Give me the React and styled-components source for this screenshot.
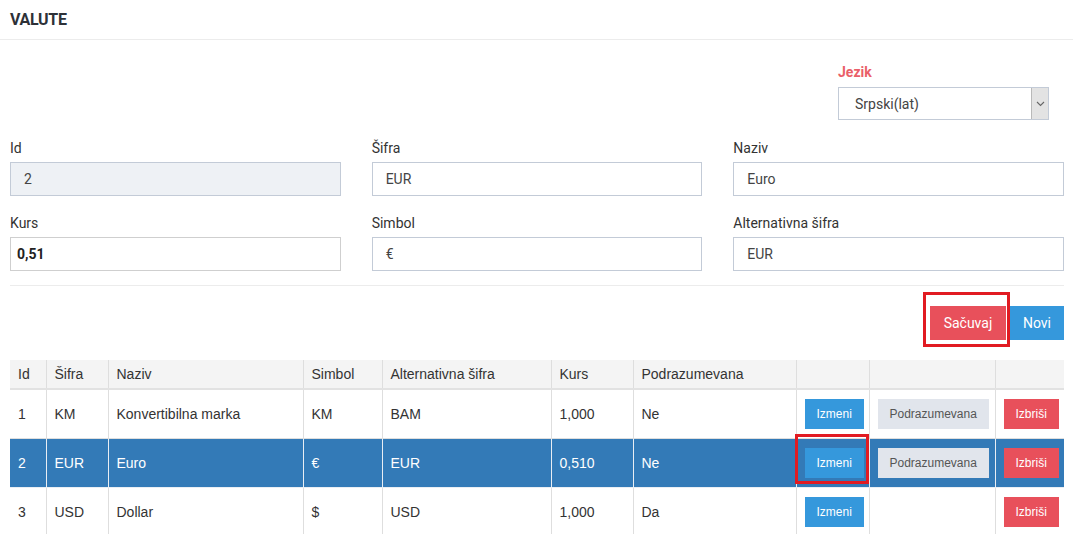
import React from 'react'
import styled, { createGlobalStyle } from 'styled-components'

const GlobalStyle = createGlobalStyle`
    body {
        margin: 0;
        background: #fff;
        color: #333;
        font-family: Roboto, 'Liberation Sans', sans-serif;
        font-size: 14px;
    }
`

const Page = styled.div`
    width: 1073px;
    height: 534px;
    overflow: hidden;
`

const TitleBar = styled.div`
    height: 39px;
    display: flex;
    align-items: center;
    padding: 0 10px;
    border-bottom: 1px solid #ececec;

    h1 {
        margin: 0;
        font-size: 16px;
        font-weight: 700;
        color: #2d3138;
        letter-spacing: -0.3px;
    }
`

const Body = styled.div`
    padding: 0 9px 0 10px;
`

const LangRow = styled.div`
    display: flex;
    justify-content: flex-end;
    padding: 22px 15px 0 0;
`

const Field = styled.div`
    display: flex;
    flex-direction: column;
    width: ${(p) => p.$width || 'auto'};
`

const Label = styled.label`
    height: 20px;
    line-height: 20px;
    margin-bottom: ${(p) => (p.$accent ? '5px' : '4px')};
    font-size: 14px;
    font-weight: ${(p) => (p.$accent ? 700 : 400)};
    color: ${(p) => (p.$accent ? '#ea5f69' : '#333')};
`

const SelectBox = styled.div`
    height: 33px;
    display: flex;
    align-items: stretch;
    border: 1px solid #c3cbd7;
    box-sizing: border-box;
    font-size: 14px;
    color: #444;
`

const SelectText = styled.span`
    flex: 1;
    display: flex;
    align-items: center;
    padding-left: 16px;
`

const SelectArrow = styled.span`
    width: 16px;
    display: flex;
    align-items: center;
    justify-content: center;
    background: #e3e3e3;
    border-left: 1px solid #b9b9b9;
`

const FormGrid = styled.div`
    display: grid;
    grid-template-columns: repeat(3, 1fr);
    column-gap: 31px;
    row-gap: 17px;
    margin-top: 18px;
`

const Input = styled.div`
    height: 34px;
    box-sizing: border-box;
    display: flex;
    align-items: center;
    padding-left: ${(p) => (p.$plain ? '6px' : '13px')};
    border: 1px solid ${(p) => (p.$plain ? '#cfcfcf' : '#c3cbd7')};
    background: ${(p) => (p.$disabled ? '#eef1f5' : '#fff')};
    font-size: 14px;
    font-weight: ${(p) => (p.$plain ? 700 : 400)};
    color: ${(p) => (p.$plain ? '#222' : '#444')};
`

const Divider = styled.hr`
    border: 0;
    border-top: 1px solid #ececec;
    margin: 14px 0 0;
`

const ActionBar = styled.div`
    display: flex;
    justify-content: flex-end;
    gap: 4px;
    margin-top: 20px;
`

const Marked = styled.span`
    position: relative;
    display: inline-flex;

    &::after {
        content: '';
        position: absolute;
        top: ${(p) => p.$t}px;
        left: ${(p) => p.$l}px;
        right: ${(p) => p.$r}px;
        bottom: ${(p) => p.$b}px;
        border: 3px solid #e11b22;
        pointer-events: none;
    }
`

const tones = {
    red: { bg: '#e8505b', fg: '#fff' },
    blue: { bg: '#3598dc', fg: '#fff' },
    grey: { bg: '#e1e5ec', fg: '#555' },
}

const Button = styled.button`
    height: ${(p) => (p.$small ? '30px' : '34px')};
    padding: 0 ${(p) => (p.$small ? '12px' : '13px')};
    border: 0;
    border-radius: 0;
    background: ${(p) => tones[p.$tone].bg};
    color: ${(p) => tones[p.$tone].fg};
    font-family: ${(p) => (p.$small ? "'Liberation Sans', Arial, sans-serif" : 'Roboto, sans-serif')};
    font-size: ${(p) => (p.$small ? '12px' : '14px')};
    cursor: pointer;
    min-width: ${(p) => p.$min || 0};
`

const Table = styled.table`
    margin-top: 20px;
    width: 1054px;
    table-layout: fixed;
    border-collapse: collapse;
    font-family: 'Liberation Sans', Arial, sans-serif;
    font-size: 14px;
    color: #333;

    th,
    td {
        border: 1px solid #dedede;
        padding: 0 8px;
        text-align: left;
        vertical-align: middle;
        white-space: nowrap;
        overflow: visible;
    }

    tr:first-child th {
        border-top: 0;
    }

    th:first-child,
    td:first-child {
        border-left: 0;
    }

    th:last-child,
    td:last-child {
        border-right: 0;
    }

    th {
        height: 28px;
        font-weight: 400;
        background: #f4f4f4;
        border-bottom: 2px solid #e2e2e2;
    }

    td {
        height: 48px;
    }
`

const Row = styled.tr`
    td {
        background: ${(p) => (p.$active ? '#337ab7' : '#fff')};
        color: ${(p) => (p.$active ? '#fff' : '#333')};
        border-color: ${(p) => (p.$active ? '#e9eef4' : '#dedede')};
    }
`

const widths = [36, 62, 195, 79, 169, 82, 163, 73, 126, 69]
const headers = ['Id', 'Šifra', 'Naziv', 'Simbol', 'Alternativna šifra', 'Kurs', 'Podrazumevana', '', '', '']

const rows = [
    { id: 1, code: 'KM', name: 'Konvertibilna marka', sym: 'KM', alt: 'BAM', rate: '1,000', def: 'Ne' },
    { id: 2, code: 'EUR', name: 'Euro', sym: '€', alt: 'EUR', rate: '0,510', def: 'Ne', active: true },
    { id: 3, code: 'USD', name: 'Dollar', sym: '$', alt: 'USD', rate: '1,000', def: 'Da' },
]

const Chevron = () => (
    <svg width="9" height="6" viewBox="0 0 9 6">
        <path d="M1 1l3.5 3.5L8 1" fill="none" stroke="#666" strokeWidth="1.1" />
    </svg>
)

export default function App() {
    return (
        <Page>
            <GlobalStyle />
            <TitleBar>
                <h1>VALUTE</h1>
            </TitleBar>
            <Body>
                <LangRow>
                    <Field $width="211px">
                        <Label $accent>Jezik</Label>
                        <SelectBox>
                            <SelectText>Srpski(lat)</SelectText>
                            <SelectArrow>
                                <Chevron />
                            </SelectArrow>
                        </SelectBox>
                    </Field>
                </LangRow>
                <FormGrid>
                    <Field>
                        <Label>Id</Label>
                        <Input $disabled>2</Input>
                    </Field>
                    <Field>
                        <Label>Šifra</Label>
                        <Input>EUR</Input>
                    </Field>
                    <Field>
                        <Label>Naziv</Label>
                        <Input>Euro</Input>
                    </Field>
                    <Field>
                        <Label>Kurs</Label>
                        <Input $plain>0,51</Input>
                    </Field>
                    <Field>
                        <Label>Simbol</Label>
                        <Input>€</Input>
                    </Field>
                    <Field>
                        <Label>Alternativna šifra</Label>
                        <Input>EUR</Input>
                    </Field>
                </FormGrid>
                <Divider />
                <ActionBar>
                    <Marked $t={-14} $l={-7} $r={-4} $b={-7}>
                        <Button $tone="red" $min="76px">Sačuvaj</Button>
                    </Marked>
                    <Button $tone="blue" $min="54px">Novi</Button>
                </ActionBar>
                <Table>
                    <colgroup>
                        {widths.map((w, i) => (
                            <col key={i} style={{ width: w }} />
                        ))}
                    </colgroup>
                    <thead>
                        <tr>
                            {headers.map((h, i) => (
                                <th key={i}>{h}</th>
                            ))}
                        </tr>
                    </thead>
                    <tbody>
                        {rows.map((r) => (
                            <Row key={r.id} $active={r.active}>
                                <td>{r.id}</td>
                                <td>{r.code}</td>
                                <td>{r.name}</td>
                                <td>{r.sym}</td>
                                <td>{r.alt}</td>
                                <td>{r.rate}</td>
                                <td>{r.def}</td>
                                <td>
                                    {r.active ? (
                                        <Marked $t={-14} $l={-10} $r={-5} $b={-6}>
                                            <Button $small $tone="blue">Izmeni</Button>
                                        </Marked>
                                    ) : (
                                        <Button $small $tone="blue">Izmeni</Button>
                                    )}
                                </td>
                                <td>
                                    {r.def === 'Ne' && (
                                        <Button $small $tone="grey">Podrazumevana</Button>
                                    )}
                                </td>
                                <td>
                                    <Button $small $tone="red">Izbriši</Button>
                                </td>
                            </Row>
                        ))}
                    </tbody>
                </Table>
            </Body>
        </Page>
    )
}
